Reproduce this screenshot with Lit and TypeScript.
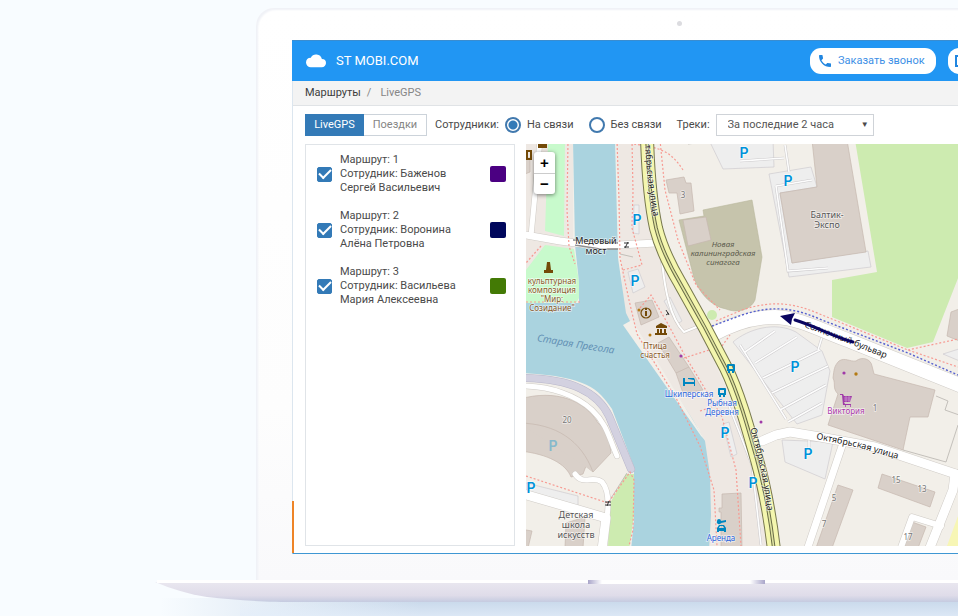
import { LitElement, html, svg, css } from "lit";
import { customElement, state } from "lit/decorators.js";

interface Route {
  id: number;
  lines: string[];
  tone: string;
}

interface Label {
  x: number;
  y: number;
  lines: string[];
  kind: string;
}

const ROUTES: Route[] = [
  { id: 1, lines: ["Маршрут: 1", "Сотрудник: Баженов", "Сергей Васильевич"], tone: "#4b0082" },
  { id: 2, lines: ["Маршрут: 2", "Сотрудник: Воронина", "Алёна Петровна"], tone: "#00075c" },
  { id: 3, lines: ["Маршрут: 3", "Сотрудник: Васильева", "Мария Алексеевна"], tone: "#437a05" },
];

const MAIN_ROAD = "M647 138 C648 170 651 205 656 228 C661 248 670 266 680 283 L704 326 L726 368 C738 392 748 428 757 460 C764 485 770 515 774 550";
const BOULEVARD = "M712 335 C730 325 752 317 775 317 C800 318 822 331 850 341 L962 386";

const BUILDINGS = [
  "M812 140H847L866 252L792 263L780 193L817 187Z",
  "M666 180L684 177L686 183H691L694 211L680 214L677 193H669Z",
  "M683 220L706 217L711 240L688 246Z",
  "M635 303L652 300L659 317L641 325Z",
  "M658 343L669 337L689 367L703 390L683 393L676 373Z",
  "M676 373L689 367",
  "M839 361C845 357 850 362 856 361C862 356 871 359 872 366L874 374L935 390L928 417H910L903 450L828 425L838 394C832 388 836 384 833 378C834 370 834 366 839 361Z",
  "M882 474L935 492L930 507L878 488Z",
  "M838 485L853 490L832 548H816Z",
  "M912 522L926 527L918 548H904Z",
  "M722 494L741 493L742 548H721V512H719V508H722Z",
  "M520 399C555 389 585 400 598 423L600 425H607L611 453L593 472L586 466L583 474L571 477C566 464 548 454 520 451Z",
  "M520 423C556 424 581 440 593 472",
  "M566 523L585 517L583 548H565Z",
  "M520 529L532 531L528 548H520Z",
  "M520 158H530V172L520 176Z",
  "M951 312L962 308V342L947 336Z",
];

const PARKINGS = [
  "M709 140H773L774 167L723 169Z",
  "M769 174L811 167L817 187L780 193L792 263L868 251L871 267L789 277Z",
  "M733 342C748 329 775 321 796 332L822 351L830 371L822 415L797 424Z",
  "M782 440L833 442L825 479L785 462Z",
  "M628 272L638 269L645 287L633 293Z",
  "M634 205H639V234L633 233Z",
  "M664 301L670 297L682 321L677 324Z",
  "M723 424L729 422L737 454L731 457Z",
  "M526 483L578 496V508L526 494Z",
  "M943 354L962 362V348Z",
];

const PARKING_AISLES =
  "M740 345L786 419M775 331L745 352M797 337L755 363M820 350L763 378M828 366L772 393M826 385L780 410M822 403L788 422" +
  "M785 145L789 172M740 161L784 158M776 186L812 180M776 186L788 271L828 268M823 334L818 350M809 436V448M729 406L752 465L761 545";

const SERVICE_ROADS: [string, number][] = [
  ["M540 140L535 194L531 236", 5],
  ["M520 234L560 241L600 246L656 243", 7],
  ["M520 386C552 386 577 396 592 410C607 424 609 438 617 456", 5],
  ["M520 493L606 518L602 550", 9],
  ["M575 474C583 486 593 475 602 482C608 489 609 502 607 517", 5],
  ["M762 441L776 435L790 432L820 437L875 447L962 476", 9],
  ["M843 443L807 550", 7],
  ["M955 474L953 490L929 550", 9],
  ["M900 550L912 517L941 526", 6],
  ["M662 262C665 290 670 318 684 332L699 326", 2],
];

const FOOTPATHS =
  "M568 140L567 210L569 246L575 264M617 140L619 200L620 258L629 300L637 334L676 398L700 446L714 490L717 546" +
  "M632 140L633 192L632 228L642 265L623 270M660 140L665 190L678 240L696 285L720 310M526 302H581" +
  "M526 476L608 503L630 472L634 480L633 530L629 546M541 246L526 263M640 308L651 295L668 324L684 354L722 417L736 470L741 546" +
  "M684 358L722 346L730 335M683 170C670 150 660 148 634 144M716 321L742 310C775 299 797 304 822 315L908 350L958 367M908 350L958 339M820 140L826 144M700 411L712 407";

const PARKING_SIGNS = [
  [744, 158], [788, 186], [637, 225], [635, 286], [795, 372],
  [808, 459], [725, 438], [753, 488], [531, 493],
];

const LABELS: Label[] = [
  { x: 596, y: 244, lines: ["Медовый", "мост"], kind: "street" },
  { x: 827, y: 218, lines: ["Балтик-", "Экспо"], kind: "place" },
  { x: 723, y: 247, lines: ["Новая", "калининградская", "синагога"], kind: "worship" },
  { x: 552, y: 284, lines: ["кульптурная", "композиция", "\"Мир:", "Созидание\""], kind: "sight" },
  { x: 655, y: 349, lines: ["Птица", "счастья"], kind: "sight" },
  { x: 689, y: 397, lines: ["Шкиперская"], kind: "stay" },
  { x: 722, y: 406, lines: ["Рыбная", "Деревня"], kind: "stay" },
  { x: 721, y: 541, lines: ["Аренда"], kind: "stay" },
  { x: 846, y: 414, lines: ["Виктория"], kind: "shop" },
  { x: 576, y: 518, lines: ["Детская", "школа", "искусств"], kind: "place" },
  { x: 567, y: 423, lines: ["20"], kind: "house" },
  { x: 683, y: 198, lines: ["3"], kind: "house" },
  { x: 875, y: 411, lines: ["1"], kind: "house" },
  { x: 834, y: 501, lines: ["5"], kind: "house" },
  { x: 824, y: 527, lines: ["7"], kind: "house" },
  { x: 896, y: 483, lines: ["15"], kind: "house" },
  { x: 922, y: 492, lines: ["13"], kind: "house" },
  { x: 908, y: 540, lines: ["17"], kind: "house" },
];

@customElement("city-map")
class CityMap extends LitElement {
  static styles = css`
    :host {
      display: block;
      position: relative;
      overflow: hidden;
      background: #f2efe9;
    }
    .canvas {
      position: absolute;
      inset: 0;
      width: 100%;
      height: 100%;
    }
    .building { fill: #d9d0c9; stroke: #c5b8af; stroke-width: 0.7; }
    .parking { fill: #eeeeee; stroke: #cfcbd0; stroke-width: 0.7; }
    .aisle-edge { fill: none; stroke: #cccacc; stroke-width: 2.6; }
    .aisle { fill: none; stroke: #fdfdfd; stroke-width: 1.6; }
    .edge { fill: none; stroke: #cfcbc6; stroke-linecap: round; stroke-linejoin: round; }
    .road { fill: none; stroke: #ffffff; stroke-linecap: round; stroke-linejoin: round; }
    .wide { stroke-linecap: butt; }
    .foot { fill: none; stroke: #f79a92; stroke-width: 1.2; stroke-dasharray: 2 2; }
    .water { fill: #aad3df; }
    text { font-family: "Noto Sans", sans-serif; text-anchor: middle; font-size: 9px; paint-order: stroke; stroke: rgba(255, 255, 255, 0.6); stroke-width: 1.5px; }
    .street { fill: #222222; font-size: 9px; }
    .along { fill: #222222; font-size: 9px; text-anchor: start; }
    .place { fill: #555555; }
    .worship { fill: #5c5c4c; font-size: 8px; font-style: italic; stroke: none; }
    .sight { fill: #8a5a2a; font-size: 8px; }
    .stay { fill: #2c66dd; font-size: 8px; }
    .shop { fill: #ac39ac; font-size: 8px; }
    .house { fill: #777777; font-size: 8px; }
    .river { fill: #6391b5; font-style: italic; font-size: 10px; text-anchor: start; stroke: none; }
    .sign { fill: #0092da; font-family: Inter, sans-serif; font-size: 14px; font-weight: 600; }
    .faded { fill: #86b9cc; stroke: none; }
    .zoom {
      position: absolute;
      left: 8px;
      top: 8px;
      display: flex;
      flex-direction: column;
      width: 21px;
      border-radius: 3px;
      background: #ffffff;
      box-shadow: 0 1px 4px rgba(0, 0, 0, 0.5);
    }
    .zoom button {
      height: 21px;
      padding: 0;
      border: 0;
      background: none;
      color: #000000;
      font: bold 15px/20px "Liberation Sans", sans-serif;
    }
    .zoom button + button { border-top: 1px solid #cccccc; }
  `;

  private label(l: Label) {
    const step = l.kind === "place" || l.kind === "street" ? 10 : 9;
    return svg`<text class=${l.kind} y=${l.y}>${l.lines.map(
      (t, i) => svg`<tspan x=${l.x} dy=${i ? step : 0}>${t}</tspan>`
    )}</text>`;
  }

  render() {
    return html`
      <svg class="canvas" viewBox="526 144 432 402" preserveAspectRatio="xMinYMin slice" role="img" aria-label="Карта">
        <defs>
          <path id="north" d="M645 145C647 172 649 197 655 224" />
          <path id="south" d="M750 429C757 450 763 476 768 515" />
          <path id="east" d="M816 439L856 447L912 463" />
          <path id="blvd" d="M804 327L850 344L910 368" />
          <path id="river" d="M537 341Q575 348 630 356" />
        </defs>
        <path fill="#ece6e0" d="M526 144H573V302H526ZM616 144H645L660 245L700 330L745 430L770 546H709L700 430L624 325Z" opacity="0.7" />
        <path fill="#c8facc" d="M548 144H565L564 236L545 231ZM545 245L574 249L579 282V298L576 303H526V270Z" />
        <path class="water" d="M573 140H615L618 258L626 313L631 323L693 420L705 441L710 475L711 515L709 550H631L634 520V467L612 409C598 388 585 376 520 373V303H579V282L575 245Z" />
        <path fill="#f2efe9" d="M623 325L632 320L705 440L701 436Z" />
        <path fill="none" stroke="#b9b7ca" stroke-width="8" stroke-linecap="round" d="M518 378C573 378 598 393 609 416L631 469" />
        <path fill="none" stroke="#d3d1e0" stroke-width="7" stroke-linecap="round" d="M518 378C573 378 598 393 609 416L631 469" />
        <path fill="#cdebb0" d="M855 140H962V268L933 342L907 348L832 317V280L877 272Z M626 474H634V515L629 550H608L609 505Z" />
        <circle cx="712" cy="315" r="5" fill="#cdebb0" />
        <path fill="#f7f6b5" d="M958 516L947 546H958Z" />
        <path fill="#c6c4ac" stroke="#b9b79c" stroke-width="0.6" d="M703 210L752 200L762 257L755 300C750 311 736 313 726 309C710 306 699 292 694 278L679 220L704 216Z" />
        ${PARKINGS.map((d) => svg`<path class="parking" d=${d} />`)}
        <path class="aisle-edge" d=${PARKING_AISLES} />
        <path class="aisle" d=${PARKING_AISLES} />
        ${BUILDINGS.map((d) => svg`<path class="building" d=${d} />`)}
        <path fill="none" stroke="#b8b4ae" stroke-width="0.8" d="M936 396L948 401L945 410L962 416M903 450L946 462L958 425M608 503L627 473M620 254L633 257M688 144L720 140" />
        ${SERVICE_ROADS.map(([d, w]) => svg`<path class="edge" d=${d} stroke-width=${w + 1} />`)}
        <path class="edge wide" d=${BOULEVARD} stroke-width="15" />
        ${SERVICE_ROADS.map(([d, w]) => svg`<path class="road" d=${d} stroke-width=${w} />`)}
        <path class="road wide" d=${BOULEVARD} stroke-width="14" />
        <path fill="none" stroke="#8d8d8d" stroke-width="1.4" d="M575 245L600 249L618 249M573 240L618 243" />
        <path class="foot" d=${FOOTPATHS} />
        <path fill="none" stroke="#5660cf" stroke-width="1.4" stroke-dasharray="2 2" d="M712 326L742 315C775 304 797 309 822 320L908 353L958 375" />

        <path d=${MAIN_ROAD} fill="none" stroke="#77784e" stroke-width="14" />
        <path d=${MAIN_ROAD} fill="none" stroke="#f4f6ae" stroke-width="12" />
        <path d=${MAIN_ROAD} fill="none" stroke="#686b46" stroke-width="3.6" />
        <path d=${MAIN_ROAD} fill="none" stroke="#dfe3a0" stroke-width="1.6" />

        ${LABELS.map((l) => this.label(l))}
        ${PARKING_SIGNS.map(([x, y]) => svg`<text class="sign" x=${x} y=${y}>P</text>`)}
        <text class="sign faded" x="553" y="451">P</text>
        <text class="along"><textPath href="#north">тябрьская улица</textPath></text>
        <text class="along"><textPath href="#south">Октябрьская улица</textPath></text>
        <text class="along"><textPath href="#east">Октябрьская улица</textPath></text>
        <text class="along"><textPath href="#blvd">Солнечный бульвар</textPath></text>
        <text class="river"><textPath href="#river">Старая Прегола</textPath></text>

        <g fill="#734a08">
          <path d="M547 262H550L551 270H553V273H544V270H546Z" />
          <path d="M538 144H547V148H538ZM526 150H532V160H526ZM528 152V158H530V152Z" fill-rule="evenodd" />
          <path d="M656 326L661 323L667 326V328H656ZM657 329H659V333H657ZM660 329H662V333H660ZM664 329H666V333H664ZM655 333H667V335H655Z" />
          <rect x="645" y="311" width="2" height="5" />
          <rect x="645" y="308" width="2" height="2" />
          <circle cx="646" cy="313" r="5" fill="none" stroke="#734a08" stroke-width="1.2" />
        </g>
        <path d="M624 243H629M624 247H629M628 242L625 248M605 502H611M605 505H611M609 501L607 506M666 310L669 315M666 315L669 313" fill="none" stroke="#333333" stroke-width="1" />
        <g fill="#b47a14">
          <circle cx="639" cy="310" r="1.5" />
          <circle cx="650" cy="335" r="1.5" />
          <circle cx="856" cy="374" r="1.7" />
        </g>
        <g fill="#a03aa8">
          <circle cx="681" cy="356" r="1.6" />
          <circle cx="844" cy="373" r="1.6" />
          <circle cx="761" cy="422" r="1.5" />
          <path d="M840 394H843L844 396H852L850 402H844L845 404H851V405H843L842 395H840ZM845 407A1 1 0 1 0 845 405ZM850 407A1 1 0 1 0 850 405Z" />
          <path d="M844 398H851M844 400H851M846 396V402M849 396V402" stroke="#dfbfe0" stroke-width="0.5" />
        </g>
        <g fill="#0086c0">
          <path fill-rule="evenodd" d="M728 364H734Q735 364 735 365V371H734V373H732V371H730V373H728V371H727V365Q727 364 728 364ZM729 366V369H733V366Z" />
          <path fill-rule="evenodd" d="M719 388H725Q726 388 726 389V395H725V397H723V395H721V397H719V395H718V389Q718 388 719 388ZM720 390V393H724V390Z" />
          <path d="M683 378H685V382H694V380L688 379V378H694L695 380V386H694V384H685V386H683Z" />
          <path fill-rule="evenodd" d="M717 521A2 2 0 1 1 721 521L726 520V522L721 523A2 2 0 0 1 717 521ZM719 525H724L726 528V532H724V531H719V532H717V528ZM720 526L719 528H724L723 526Z" />
        </g>

        <path d="M795 320C815 326 832 336 853 342" fill="none" stroke="#0a0560" stroke-width="3" stroke-linecap="round" />
        <path d="M780 316L795 313L792 319L791 325Z" fill="#0a0560" />
      </svg>
      <div class="zoom">
        <button aria-label="Приблизить">+</button>
        <button aria-label="Отдалить">−</button>
      </div>
    `;
  }
}

@customElement("app-root")
class AppRoot extends LitElement {
  @state() private presence = "online";

  static styles = css`
    :host {
      display: flex;
      flex-direction: column;
      position: relative;
      min-height: 100vh;
      box-sizing: border-box;
      padding-top: 8px;
      overflow: hidden;
      background: #f8fcff;
      color: #4a4a4a;
      font: 11px/14px Roboto, sans-serif;
    }
    * { box-sizing: border-box; }
    button, select { font: inherit; }
    .lid {
      position: relative;
      flex: 1;
      display: flex;
      margin-left: 256px;
      padding: 32px 0 26px 36px;
      border-radius: 18px 0 0 0;
      background: linear-gradient(#ffffff, #fdfdfd 70%, #f9f9fb);
      box-shadow: inset 2px 2px 2px #f0f2f7;
    }
    .camera {
      position: absolute;
      left: 421px;
      top: 13px;
      width: 5px;
      height: 5px;
      border-radius: 50%;
      background: #dcdce0;
    }
    .screen {
      position: relative;
      flex: 1;
      min-width: 0;
      display: flex;
      flex-direction: column;
      background: #ffffff;
      border-left: 1px solid #dce6ef;
      border-bottom: 1px solid #3f97d3;
    }
    .screen::before {
      content: "";
      position: absolute;
      left: -1px;
      bottom: 0;
      width: 2px;
      height: 52px;
      background: #ee8427;
    }
    .bar {
      display: flex;
      align-items: center;
      height: 41px;
      padding-left: 12px;
      margin-left: -1px;
      border-top: 1px solid #3a8dd0;
      background: #2196f3;
      color: #ffffff;
    }
    .cloud { width: 24px; height: 24px; fill: #ffffff; }
    .brand { flex: 1; margin-left: 8px; font-size: 13px; }
    .actions { display: flex; gap: 12px; width: 148px; overflow: hidden; }
    .pill {
      flex: none;
      display: flex;
      align-items: center;
      gap: 5px;
      width: 126px;
      height: 26px;
      padding: 0 7px;
      border: 0;
      border-radius: 11px;
      background: #ffffff;
      color: #3d8fe6;
      white-space: nowrap;
    }
    .pill svg { flex: none; width: 16px; height: 16px; fill: #2186e0; }
    .crumbs {
      display: flex;
      gap: 6px;
      height: 25px;
      align-items: center;
      padding-left: 12px;
      border-bottom: 1px solid #e0e3e6;
      background: #f3f3f3;
      color: #868686;
    }
    .crumbs a { color: #3c3c3c; text-decoration: none; }
    .crumbs span:last-child { margin-left: 3px; }
    .tools {
      display: flex;
      align-items: center;
      height: 38px;
      padding-left: 12px;
    }
    .tab {
      height: 22px;
      padding: 0;
      border: 1px solid #ccd3da;
      background: #ffffff;
      color: #858585;
    }
    .tab.on { width: 59px; border-color: #337ab7; background: #337ab7; color: #ffffff; }
    .tab.off { width: 63px; border-left: 0; }
    .caption { margin: 0 6px 0 8px; }
    .choice { display: flex; align-items: center; gap: 6px; margin-right: 15px; }
    input { appearance: none; margin: 0; flex: none; }
    input[type="radio"] {
      width: 16px;
      height: 16px;
      border: 2px solid #4179ae;
      border-radius: 50%;
      background: #ffffff;
    }
    input[type="radio"]:checked { background: radial-gradient(circle, #337ab7 4px, #ffffff 5px); }
    .period { position: relative; display: flex; margin-left: 6px; }
    .period select {
      appearance: none;
      width: 158px;
      height: 22px;
      padding: 0 11px;
      border: 1px solid #cfd3d8;
      border-radius: 0;
      background: #ffffff;
      color: #555555;
    }
    .period span { position: absolute; right: 5px; top: 4px; font-size: 8px; pointer-events: none; }
    .work {
      flex: 1;
      display: grid;
      grid-template-columns: 210px minmax(0, 1fr);
      gap: 11px;
      padding: 0 0 7px 12px;
    }
    .routes {
      display: flex;
      flex-direction: column;
      gap: 14px;
      padding: 8px 8px 8px 11px;
      border: 1px solid #e0e4e8;
    }
    .route { display: flex; align-items: center; }
    .route label { flex: 1; display: flex; align-items: center; gap: 8px; }
    .lines { display: flex; flex-direction: column; }
    input[type="checkbox"] {
      display: grid;
      place-items: center;
      width: 15px;
      height: 15px;
      border: 1px solid #337ab7;
      border-radius: 2px;
      background: #ffffff;
    }
    input[type="checkbox"]:checked { background: #337ab7; }
    input[type="checkbox"]:checked::after {
      content: "";
      width: 10px;
      height: 5px;
      margin-bottom: 3px;
      border: solid #ffffff;
      border-width: 0 0 2px 2px;
      transform: rotate(-45deg);
    }
    .swatch { width: 16px; height: 16px; border-radius: 2px; }
    .base { flex: none; display: block; width: 100%; height: 36px; }
  `;

  private choice(value: string, text: string) {
    return html`<label class="choice">
      <input type="radio" name="presence" .checked=${this.presence === value} @change=${() => (this.presence = value)} />
      ${text}
    </label>`;
  }

  render() {
    return html`
      <div class="lid">
        <div class="camera"></div>
        <main class="screen">
          <header class="bar">
            <svg class="cloud" viewBox="0 0 24 24" aria-hidden="true">
              <path d="M17.9 10A6 6 0 0 0 6.8 8.8A5 5 0 0 0 2 13.6A4.8 4.8 0 0 0 7 18.3H17.8A4.2 4.2 0 0 0 22 14.1A4.1 4.1 0 0 0 17.9 10Z" />
            </svg>
            <div class="brand">ST MOBI.COM</div>
            <div class="actions">
              <button class="pill">
                <svg viewBox="0 0 24 24" aria-hidden="true">
                  <path d="M6.62 10.79c1.44 2.83 3.76 5.14 6.59 6.59l2.2-2.2c.27-.27.67-.36 1.02-.24 1.12.37 2.33.57 3.57.57.55 0 1 .45 1 1V20c0 .55-.45 1-1 1C10.61 21 3 13.39 3 4c0-.55.45-1 1-1h3.5c.55 0 1 .45 1 1 0 1.25.2 2.45.57 3.57.11.35.03.74-.25 1.02z" />
                </svg>
                Заказать звонок
              </button>
              <button class="pill" aria-label="Профиль">
                <svg viewBox="0 0 16 16" aria-hidden="true"><path d="M0 2H16V14H0ZM2 4V12H14V4Z" fill-rule="evenodd" /></svg>
              </button>
            </div>
          </header>
          <nav class="crumbs">
            <a href="#routes">Маршруты</a><span>/</span><span>LiveGPS</span>
          </nav>
          <div class="tools">
            <button class="tab on">LiveGPS</button>
            <button class="tab off">Поездки</button>
            <span class="caption">Сотрудники:</span>
            ${this.choice("online", "На связи")} ${this.choice("offline", "Без связи")}
            <label for="period">Треки:</label>
            <div class="period">
              <select id="period">
                <option>За последние 2 часа</option>
              </select>
              <span aria-hidden="true">▼</span>
            </div>
          </div>
          <div class="work">
            <section class="routes">
              ${ROUTES.map(
                (r) => html`<div class="route">
                  <label>
                    <input type="checkbox" checked />
                    <span class="lines">${r.lines.map((t) => html`<span>${t}</span>`)}</span>
                  </label>
                  <div class="swatch" style="background:${r.tone}"></div>
                </div>`
              )}
            </section>
            <city-map></city-map>
          </div>
        </main>
      </div>
      <svg class="base" aria-hidden="true">
        <defs>
          <linearGradient id="metal" x1="0" y1="0" x2="0" y2="22" gradientUnits="userSpaceOnUse">
            <stop offset="0.1" stop-color="#e9e7f0" />
            <stop offset="0.7" stop-color="#dfdce9" />
            <stop offset="1" stop-color="#c5cbe0" />
          </linearGradient>
          <linearGradient id="shade" x1="160" y1="0" x2="420" y2="0" gradientUnits="userSpaceOnUse">
            <stop offset="0" stop-color="#c8d8ea" stop-opacity="0" />
            <stop offset="1" stop-color="#c8d8ea" />
          </linearGradient>
          <linearGradient id="fade" x1="0" y1="20" x2="0" y2="36" gradientUnits="userSpaceOnUse">
            <stop offset="0" stop-color="#e4eefa" stop-opacity="0" />
            <stop offset="1" stop-color="#e4eefa" stop-opacity="0.7" />
          </linearGradient>
          <linearGradient id="notch-left">
            <stop offset="0" stop-color="#a9a5c9" />
            <stop offset="1" stop-color="#ffffff" />
          </linearGradient>
          <linearGradient id="notch-right">
            <stop offset="0" stop-color="#ffffff" />
            <stop offset="1" stop-color="#a9a5c9" />
          </linearGradient>
        </defs>
        <rect x="160" y="18" width="100%" height="18" fill="url(#shade)" />
        <rect x="240" y="20" width="100%" height="16" fill="url(#fade)" />
        <path d="M155 2C172 9 188 14 207 17C235 20 260 22 300 22H340V2Z" fill="url(#metal)" />
        <rect x="339" y="2" width="100%" height="20" fill="url(#metal)" />
        <rect x="157" y="0" width="100%" height="3" fill="#ffffff" />
        <rect x="588" y="0" width="14" height="4" fill="url(#notch-left)" />
        <rect x="602" y="0" width="148" height="4" fill="#ffffff" />
        <rect x="750" y="0" width="15" height="4" fill="url(#notch-right)" />
      </svg>
    `;
  }
}
